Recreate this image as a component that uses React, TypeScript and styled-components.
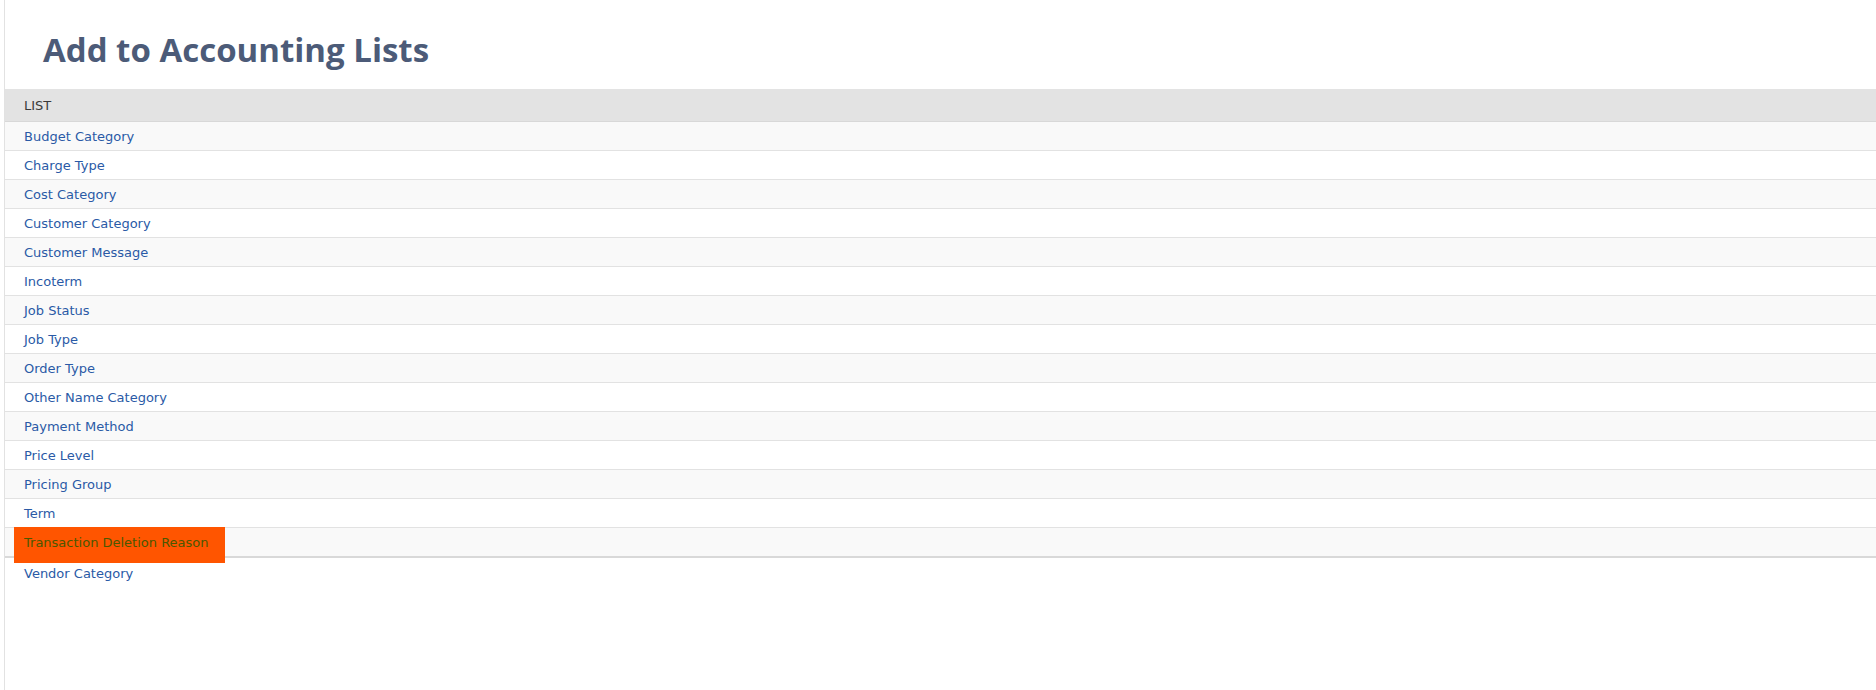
import React from "react";
import styled, { createGlobalStyle } from "styled-components";

const LISTS = [
  "Budget Category",
  "Charge Type",
  "Cost Category",
  "Customer Category",
  "Customer Message",
  "Incoterm",
  "Job Status",
  "Job Type",
  "Order Type",
  "Other Name Category",
  "Payment Method",
  "Price Level",
  "Pricing Group",
  "Term",
  "Transaction Deletion Reason",
];
const FLAGGED = "Transaction Deletion Reason";
const TRAILING = "Vendor Category";

const App: React.FC = () => {
  return (
    <>
      <GlobalStyle />
      <Page>
        <TitleBar>
          <Title>Add to Accounting Lists</Title>
        </TitleBar>
        <ListTable>
          <thead>
            <tr>
              <HeadCell>List</HeadCell>
            </tr>
          </thead>
          <tbody>
            {LISTS.map((name, index) => (
              <Row key={name} $odd={index % 2 === 0} $last={index === LISTS.length - 1}>
                <Cell $flagged={name === FLAGGED}>
                  <ListLink href="#" $flagged={name === FLAGGED}>
                    {name}
                  </ListLink>
                </Cell>
              </Row>
            ))}
          </tbody>
        </ListTable>
        <TrailingRow>
          <ListLink href="#">{TRAILING}</ListLink>
        </TrailingRow>
      </Page>
    </>
  );
};

const GlobalStyle = createGlobalStyle`
  html, body {
    margin: 0;
    padding: 0;
    background: #ffffff;
  }
  body {
    font-family: "DejaVu Sans", Verdana, sans-serif;
    font-size: 13px;
  }
`;

const Page = styled.div`
  margin-left: 4px;
  border-left: 1px solid #e2e2e2;
  min-height: 690px;
  box-sizing: border-box;
`;

const TitleBar = styled.div`
  padding: 33px 0 22px 38px;
  height: 89px;
  box-sizing: border-box;
`;

const Title = styled.h1`
  margin: 0;
  font-family: "Open Sans", "Liberation Sans", sans-serif;
  font-size: 33px;
  line-height: 34px;
  font-weight: 700;
  color: #4c5b78;
`;

const ListTable = styled.table`
  width: 100%;
  border-collapse: collapse;
  border-spacing: 0;
`;

const HeadCell = styled.th`
  height: 31px;
  padding: 1px 19px 0;
  text-align: left;
  font-weight: 400;
  text-transform: uppercase;
  color: #3a3a3a;
  background: #e3e3e3;
  border-bottom: 1px solid #d8d8d8;
`;

const Row = styled.tr<{ $odd: boolean; $last: boolean }>`
  background: ${(p) => (p.$odd ? "#f9f9f9" : "#ffffff")};
  border-bottom: ${(p) => (p.$last ? "2px solid #d9d9d9" : "1px solid #e2e2e2")};
`;

const Cell = styled.td<{ $flagged?: boolean }>`
  position: relative;
  height: 28px;
  padding: 2px 19px 0;
  box-sizing: border-box;
  line-height: 26px;

  &::before {
    content: "";
    display: ${(p) => (p.$flagged ? "block" : "none")};
    position: absolute;
    left: 9px;
    top: -1px;
    width: 211px;
    height: 36px;
    background: #ff5500;
  }
`;

const ListLink = styled.a<{ $flagged?: boolean }>`
  position: relative;
  z-index: 1;
  color: ${(p) => (p.$flagged ? "#4b5800" : "#2a5aa6")};
  text-decoration: none;
`;

const TrailingRow = styled.div`
  height: 28px;
  line-height: 28px;
  padding: 2px 19px 0;
`;

export default App;
